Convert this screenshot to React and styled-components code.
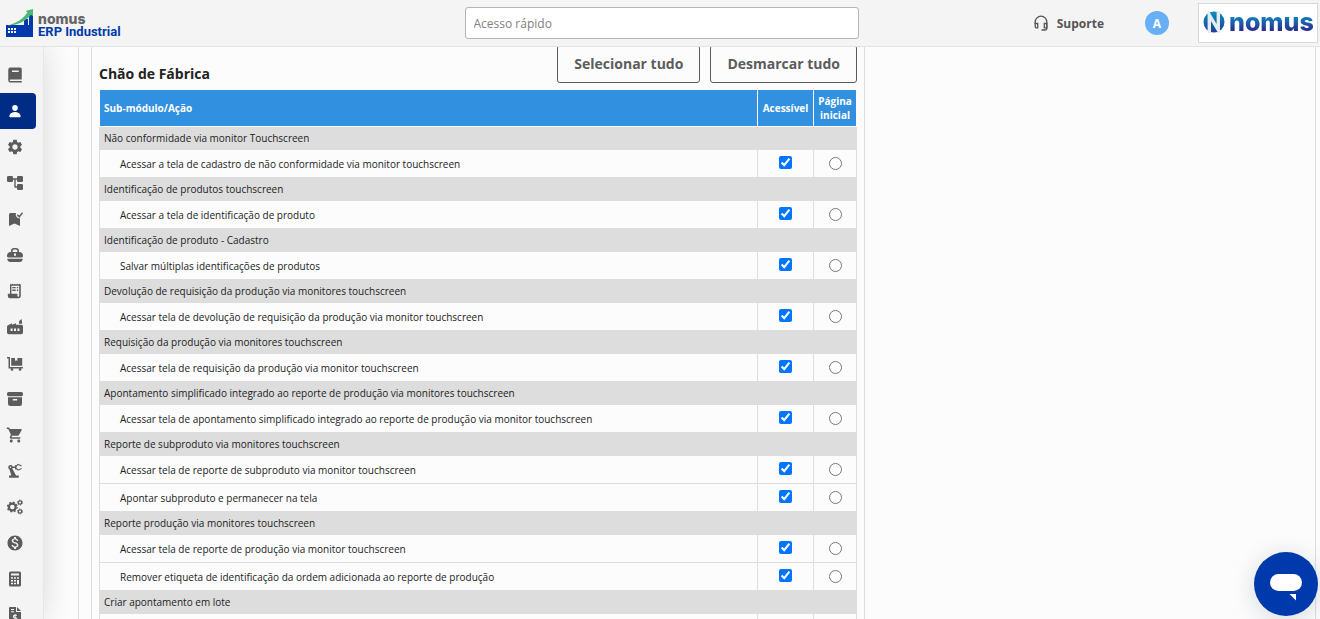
import React, { Fragment, useState } from 'react'
import styled, { createGlobalStyle } from 'styled-components'
import {
  MdMonetizationOn,
  MdPrecisionManufacturing,
  MdSettings,
  MdShoppingCart,
} from 'react-icons/md'
import { BiSolidBook } from 'react-icons/bi'
import { IoPerson } from 'react-icons/io5'

const TreeIcon = () => (
  <svg viewBox="0 0 16 16" fill="currentColor">
    <rect x="0" y="1" width="6" height="6" rx="1.300" />
    <rect x="10" y="1" width="6" height="6" rx="1.300" />
    <rect x="10" y="9" width="6" height="6" rx="1.300" />
    <path d="M5 3.300h6v1.400H8.700v6.600H11v1.400H8.300a1 1 0 0 1-1-1v-7H5z" />
  </svg>
)

const BookmarkIcon = () => (
  <svg viewBox="0 0 16 16" fill="currentColor">
    <path d="M2 3.500A1.500 1.500 0 0 1 3.500 2H9a4 4 0 0 0 4 5.500V15l-5.500-2.600L2 15z" />
    <path
      d="M10.300 3.800l2 2L15.600 1.600"
      fill="none"
      stroke="currentColor"
      strokeWidth="1.500"
    />
  </svg>
)

const ToolboxIcon = () => (
  <svg viewBox="0 0 16 16" fill="currentColor">
    <path
      fillRule="evenodd"
      d="M4 5V4a3 3 0 0 1 3-3h2a3 3 0 0 1 3 3v1a4 4 0 0 1 4 4c0 1-.5 1.400-1.500 1.400h-13C.5 10.400 0 10 0 9a4 4 0 0 1 4-4zm1.600 0h4.800V4A1.500 1.500 0 0 0 9 2.600H7A1.500 1.500 0 0 0 5.600 4zM7 6.500v2.200h2V6.500z"
    />
    <path d="M.3 11.700h15.400a3.300 3.300 0 0 1-3 3.300H3.300a3.300 3.300 0 0 1-3-3.300z" />
  </svg>
)

const ReceiptIcon = () => (
  <svg viewBox="0 0 16 16" fill="currentColor">
    <path
      fillRule="evenodd"
      d="M3 .8l1.200.8L5.400.8l1.200.8L7.800.8 9 1.600l1.200-.8 1.200.8 1.200-.8 1.200.8V13a2.300 2.300 0 0 1-2.300 2.300H3A2.300 2.300 0 0 1 .8 13v-2.200H3zM4.400 2.800v8h6v2a.9.9 0 0 0 1.800 0v-10z"
    />
    <path d="M5.300 4h3.400v1.300H5.300zM9.800 4h1.400v1.300H9.800zM5.300 6.600h3.400v1.300H5.300zM9.800 6.600h1.400v1.300H9.800z" />
  </svg>
)

const FactoryIcon = () => (
  <svg viewBox="0 0 16 16" fill="currentColor">
    <path
      fillRule="evenodd"
      d="M0 8c0-1 .6-1.700 1.500-2.100L5 4.200v1.600l4-1.600v1.600h5.500A1.500 1.500 0 0 1 16 7.300v6.200a1.800 1.800 0 0 1-1.800 1.800H1.800A1.800 1.800 0 0 1 0 13.500zM3.600 9.500V12h2V9.500zm3.400 0V12h2V9.500zm3.400 0V12h2V9.500z"
    />
    <path d="M12 4.800V2.300L14.600 0l.6 4.800z" />
  </svg>
)

const TrolleyIcon = () => (
  <svg viewBox="0 0 16 16" fill="currentColor">
    <path d="M0 2h3v10h13v1.400H1.500v-10H0z" />
    <path d="M4.200 3H8v3l1.200-.8 1.200.8V3h4.800v7.800H4.200z" />
    <circle cx="5" cy="14.400" r="1.300" />
    <circle cx="13" cy="14.400" r="1.300" />
  </svg>
)

const ArchiveIcon = () => (
  <svg viewBox="0 0 16 16" fill="currentColor">
    <rect x="0" y="1" width="16" height="4.200" rx="1.600" />
    <path
      fillRule="evenodd"
      d="M1 6.200h14v6.300a2.500 2.500 0 0 1-2.500 2.500h-9A2.500 2.500 0 0 1 1 12.500zM5.800 8v1.500h4.400V8z"
    />
  </svg>
)

const GearsIcon = () => (
  <svg viewBox="0 0 16 16" fill="none" stroke="currentColor">
    <circle cx="5.300" cy="8" r="3.400" strokeWidth="2.200" />
    <circle
      cx="5.300"
      cy="8"
      r="4.800"
      strokeWidth="1.400"
      strokeDasharray="1.900 1.870"
    />
    <circle cx="13" cy="3.500" r="1.700" strokeWidth="1.300" />
    <circle
      cx="13"
      cy="3.500"
      r="2.500"
      strokeWidth="1"
      strokeDasharray="1.300 1.318"
    />
    <circle cx="13" cy="12.500" r="1.700" strokeWidth="1.300" />
    <circle
      cx="13"
      cy="12.500"
      r="2.500"
      strokeWidth="1"
      strokeDasharray="1.300 1.318"
    />
  </svg>
)

const CalculatorIcon = () => (
  <svg viewBox="0 0 16 16" fill="currentColor">
    <path
      fillRule="evenodd"
      d="M3.500.5h9A1.500 1.500 0 0 1 14 2v12a1.500 1.500 0 0 1-1.500 1.500h-9A1.500 1.500 0 0 1 2 14V2A1.500 1.500 0 0 1 3.500.5zM4 2.500v2h8v-2zM4 6.300v1.500h2V6.300zm3 0v1.500h2V6.300zm3 0v1.500h2V6.300zM4 9v1.500h2V9zm3 0v1.500h2V9zm3 0v4.200h2V9zM4 11.700v1.500h2v-1.500zm3 0v1.500h2v-1.500z"
    />
  </svg>
)

const InvoiceIcon = () => (
  <svg viewBox="0 0 16 16" fill="currentColor">
    <path
      fillRule="evenodd"
      d="M2.500 0H9v5h5v9.500a1.500 1.500 0 0 1-1.500 1.500h-9.500A1 1 0 0 1 2 15V1zM4 2v1h3V2zm0 2.200v1h3v-1z"
    />
    <path d="M10 0l4 4h-4z" />
    <path
      d="M10 8.300H7.500a1.200 1.200 0 0 0 0 2.400h1.200a1.200 1.200 0 0 1 0 2.400H6.200M8.100 7v7.500"
      fill="none"
      stroke="#f4f4f4"
      strokeWidth="1.100"
    />
  </svg>
)

const HeadsetIcon = () => (
  <svg viewBox="0 0 16 16" fill="none" stroke="currentColor" strokeWidth="1.300">
    <path d="M2.200 9V7a5.800 5.800 0 0 1 11.600 0v6.500a1.500 1.500 0 0 1-1.500 1.500H8.500" />
    <path d="M2.200 8.500h2.500v4.300H3.500a1.300 1.300 0 0 1-1.300-1.300zM13.800 8.500h-2.500v4.300h2.500z" />
  </svg>
)

const FactoryMark = () => (
  <svg width="30" height="30" viewBox="0 0 30 30">
    <path fill="#0039ab" d="M1 17h18v-6h4v6h1V7h4v22H1z" />
    <path
      fill="#f4f4f4"
      d="M3 20h2v2H3zM6 20h2v2H6zM9 20h2v2H9zM3 23h2v2H3zM6 23h2v2H6zM9 23h2v2H9z"
    />
    <path
      fill="#4cb873"
      d="M2 17.500C11 15.500 18 11 22.500 4.500L20.500 3l7.500-2v7.500l-2-1.700C21 13 13 17.500 2 17.500z"
    />
  </svg>
)

const NomusSymbol = () => (
  <svg width="22" height="22" viewBox="0 0 22 22">
    <defs>
      <linearGradient id="nomus-symbol" x1="0" y1="0" x2="0" y2="1">
        <stop offset="0" stopColor="#0a8fc4" />
        <stop offset="1" stopColor="#1f3d97" />
      </linearGradient>
    </defs>
    <circle cx="11" cy="11" r="10.500" fill="url(#nomus-symbol)" />
    <path
      d="M6.300 22V4l9 15V0"
      fill="none"
      stroke="#e6ecf2"
      strokeWidth="3.400"
    />
  </svg>
)

const menuItems = [
  { label: 'Cadastros', icon: BiSolidBook, size: 18 },
  { label: 'Usuários', icon: IoPerson, size: 14, active: true },
  { label: 'Configurações', icon: MdSettings, size: 18 },
  { label: 'Processos', icon: TreeIcon, size: 16 },
  { label: 'Qualidade', icon: BookmarkIcon, size: 16 },
  { label: 'Comercial', icon: ToolboxIcon, size: 16 },
  { label: 'Pedidos', icon: ReceiptIcon, size: 16 },
  { label: 'Produção', icon: FactoryIcon, size: 16 },
  { label: 'Expedição', icon: TrolleyIcon, size: 16 },
  { label: 'Estoque', icon: ArchiveIcon, size: 16 },
  { label: 'Compras', icon: MdShoppingCart, size: 18 },
  { label: 'Chão de fábrica', icon: MdPrecisionManufacturing, size: 18 },
  { label: 'Manutenção', icon: GearsIcon, size: 16 },
  { label: 'Financeiro', icon: MdMonetizationOn, size: 18 },
  { label: 'Custos', icon: CalculatorIcon, size: 16 },
  { label: 'Fiscal', icon: InvoiceIcon, size: 16 },
]

const initialGroups = [
  {
    name: 'Não conformidade via monitor Touchscreen',
    actions: [
      'Acessar a tela de cadastro de não conformidade via monitor touchscreen',
    ],
  },
  {
    name: 'Identificação de produtos touchscreen',
    actions: ['Acessar a tela de identificação de produto'],
  },
  {
    name: 'Identificação de produto - Cadastro',
    actions: ['Salvar múltiplas identificações de produtos'],
  },
  {
    name: 'Devolução de requisição da produção via monitores touchscreen',
    actions: [
      'Acessar tela de devolução de requisição da produção via monitor touchscreen',
    ],
  },
  {
    name: 'Requisição da produção via monitores touchscreen',
    actions: ['Acessar tela de requisição da produção via monitor touchscreen'],
  },
  {
    name: 'Apontamento simplificado integrado ao reporte de produção via monitores touchscreen',
    actions: [
      'Acessar tela de apontamento simplificado integrado ao reporte de produção via monitor touchscreen',
    ],
  },
  {
    name: 'Reporte de subproduto via monitores touchscreen',
    actions: [
      'Acessar tela de reporte de subproduto via monitor touchscreen',
      'Apontar subproduto e permanecer na tela',
    ],
  },
  {
    name: 'Reporte produção via monitores touchscreen',
    actions: [
      'Acessar tela de reporte de produção via monitor touchscreen',
      'Remover etiqueta de identificação da ordem adicionada ao reporte de produção',
    ],
  },
  {
    name: 'Criar apontamento em lote',
    actions: [''],
  },
]

const allActions = initialGroups.flatMap((group) => group.actions)

const App = () => {
  const [allowed, setAllowed] = useState(allActions)
  const [home, setHome] = useState(null)

  const toggle = (action) => {
    setAllowed((prev) =>
      prev.includes(action)
        ? prev.filter((item) => item !== action)
        : [...prev, action]
    )
  }

  return (
    <>
      <GlobalStyle />
      <Page>
        <Header>
          <Brand href="#">
            <FactoryMark />
            <BrandText>
              <BrandName>nomus</BrandName>
              <BrandProduct>ERP Industrial</BrandProduct>
            </BrandText>
          </Brand>
          <Search
            type="text"
            placeholder="Acesso rápido"
            aria-label="Acesso rápido"
          />
          <HeaderActions>
            <Support href="#">
              <HeadsetIcon />
              Suporte
            </Support>
            <Avatar type="button">A</Avatar>
            <Company>
              <NomusSymbol />
              <CompanyName>nomus</CompanyName>
            </Company>
          </HeaderActions>
        </Header>
        <Body>
          <Sidebar>
            {menuItems.map(({ label, icon: Icon, size, active }) => (
              <MenuLink
                key={label}
                href="#"
                aria-label={label}
                $active={active}
                $size={size}
              >
                <Icon />
              </MenuLink>
            ))}
          </Sidebar>
          <Main>
            <Panel>
              <Module>
                <ModuleHeader>
                  <h2>Chão de Fábrica</h2>
                  <Buttons>
                    <OutlineButton
                      type="button"
                      onClick={() => setAllowed(allActions)}
                    >
                      Selecionar tudo
                    </OutlineButton>
                    <OutlineButton type="button" onClick={() => setAllowed([])}>
                      Desmarcar tudo
                    </OutlineButton>
                  </Buttons>
                </ModuleHeader>
                <Table>
                  <colgroup>
                    <col />
                    <col width="56" />
                    <col width="43" />
                  </colgroup>
                  <thead>
                    <tr>
                      <th>Sub-módulo/Ação</th>
                      <th>Acessível</th>
                      <th>Página inicial</th>
                    </tr>
                  </thead>
                  <tbody>
                    {initialGroups.map((group) => (
                      <Fragment key={group.name}>
                        <GroupRow>
                          <td colSpan={3}>{group.name}</td>
                        </GroupRow>
                        {group.actions.map((action) => (
                          <ActionRow key={action}>
                            <td>{action}</td>
                            <td>
                              <Check
                                type="checkbox"
                                aria-label={`Acessível: ${action}`}
                                checked={allowed.includes(action)}
                                onChange={() => toggle(action)}
                              />
                            </td>
                            <td>
                              <Radio
                                type="radio"
                                name="home"
                                aria-label={`Página inicial: ${action}`}
                                checked={home === action}
                                onChange={() => setHome(action)}
                              />
                            </td>
                          </ActionRow>
                        ))}
                      </Fragment>
                    ))}
                  </tbody>
                </Table>
              </Module>
            </Panel>
          </Main>
        </Body>
        <ChatButton type="button" aria-label="Abrir chat">
          <svg width="64" height="64" viewBox="0 0 64 64" fill="#fff">
            <rect x="16" y="22" width="32" height="17" rx="8.500" />
            <path d="M35.500 42H42v6.500z" />
          </svg>
        </ChatButton>
      </Page>
    </>
  )
}

const GlobalStyle = createGlobalStyle`
  * {
    box-sizing: border-box;
  }
  body {
    margin: 0;
    background-color: #fcfcfc;
    color: #222;
    font-family: 'Open Sans', sans-serif;
    font-size: 10px;
  }
`

const Page = styled.div`
  display: flex;
  flex-direction: column;
  height: 100vh;
  overflow: hidden;
`

const Header = styled.header`
  display: grid;
  grid-template-columns: 1fr 394px 1fr;
  align-items: center;
  flex: none;
  height: 47px;
  padding: 0 2px 0 5px;
  background-color: #f4f4f4;
  border-bottom: 1px solid #e3e3e3;
  z-index: 2;
`

const Brand = styled.a`
  display: flex;
  align-items: center;
  gap: 3px;
  text-decoration: none;
`

const BrandText = styled.span`
  display: flex;
  flex-direction: column;
  padding-top: 4px;
`

const BrandName = styled.span`
  color: #666;
  font: 800 14px/13px Inter, sans-serif;
`

const BrandProduct = styled.span`
  color: #0039ab;
  font: bold 13px/14px Roboto, sans-serif;
`

const Search = styled.input`
  height: 32px;
  padding: 0 8px;
  border: 1px solid #b5b5b5;
  border-radius: 3px;
  background-color: #fff;
  color: #444;
  font: 12px 'Open Sans', sans-serif;
  &::placeholder {
    color: #808080;
  }
`

const HeaderActions = styled.div`
  display: flex;
  justify-content: flex-end;
  align-items: center;
`

const Support = styled.a`
  display: flex;
  align-items: center;
  gap: 8px;
  margin-right: 41px;
  color: #555;
  font-size: 12px;
  font-weight: 700;
  text-decoration: none;
  svg {
    width: 16px;
    height: 16px;
  }
`

const Avatar = styled.button`
  width: 24px;
  height: 24px;
  margin-right: 29px;
  padding: 0;
  border: none;
  border-radius: 50%;
  background-color: #68aff5;
  color: #fff;
  font: bold 12px 'Open Sans', sans-serif;
`

const Company = styled.div`
  display: flex;
  align-items: center;
  gap: 4px;
  width: 120px;
  height: 40px;
  padding: 0 0 2px 4px;
  border: 1px solid #d8d8d8;
  background-color: #fff;
`

const CompanyName = styled.span`
  background: linear-gradient(#0a93c8 20%, #2a2f8f 80%);
  background-clip: text;
  color: transparent;
  font: 800 25px/28px Inter, sans-serif;
`

const Body = styled.div`
  display: flex;
  flex: 1;
  min-height: 0;
`

const Sidebar = styled.nav`
  flex: none;
  width: 44px;
  padding-top: 10px;
  background-color: #f4f4f4;
  border-right: 1px solid #e6e6e6;
  box-shadow: 0 0 32px rgba(0, 0, 0, 0.14);
`

const MenuLink = styled.a`
  display: flex;
  align-items: center;
  justify-content: center;
  width: 36px;
  height: 36px;
  padding-right: 6px;
  border-radius: 0 4px 4px 0;
  background-color: ${(props) => (props.$active ? '#002c86' : 'transparent')};
  color: ${(props) => (props.$active ? '#fff' : '#5c5c5c')};
  svg {
    flex: none;
    width: ${(props) => props.$size}px;
    height: ${(props) => props.$size}px;
  }
`

const Main = styled.main`
  flex: 1;
  min-width: 0;
  padding: 0 4px 0 34px;
`

const Panel = styled.section`
  padding-left: 12px;
  border: solid #ddd;
  border-width: 0 1px;
`

const Module = styled.section`
  width: 774px;
  max-width: 100%;
  padding: 0 7px;
  border: solid #ddd;
  border-width: 0 1px;
`

const ModuleHeader = styled.div`
  display: flex;
  justify-content: space-between;
  align-items: flex-end;
  margin-top: -2px;
  padding-bottom: 6px;
  h2 {
    margin: 0;
    color: #222;
    font-size: 14px;
    line-height: 18px;
  }
`

const Buttons = styled.div`
  display: flex;
  gap: 10px;
`

const OutlineButton = styled.button`
  height: 38px;
  padding: 0 16px 2px;
  border: 1px solid #5c5c5c;
  border-radius: 3px;
  background-color: #fcfcfc;
  color: #5c5c5c;
  font: bold 14px 'Open Sans', sans-serif;
`

const Table = styled.table`
  width: 100%;
  border-collapse: collapse;
  table-layout: fixed;
  th,
  td {
    padding: 0 4px;
    border: 1px solid #ddd;
    text-align: center;
  }
  th {
    height: 37px;
    padding: 0;
    border-color: #fcfcfc;
    background-color: #3190df;
    color: #fff;
    line-height: 14px;
  }
  th:first-child {
    padding-left: 4px;
    text-align: left;
  }
`

const GroupRow = styled.tr`
  height: 23px;
  background-color: #ddd;
  td {
    text-align: left;
  }
`

const ActionRow = styled.tr`
  height: 28px;
  td:first-child {
    padding-top: 1px;
    padding-left: 20px;
    text-align: left;
  }
`

const Check = styled.input`
  display: block;
  width: 13px;
  height: 13px;
  margin: 0 auto 2px;
`

const Radio = styled.input`
  display: block;
  width: 13px;
  height: 13px;
  margin: 0 auto;
`

const ChatButton = styled.button`
  position: fixed;
  right: 2px;
  bottom: 3px;
  z-index: 3;
  width: 64px;
  height: 64px;
  padding: 0;
  border: none;
  border-radius: 50%;
  background-color: #0039ab;
  box-shadow: 0 4px 24px rgba(0, 30, 60, 0.16);
`

export default App
